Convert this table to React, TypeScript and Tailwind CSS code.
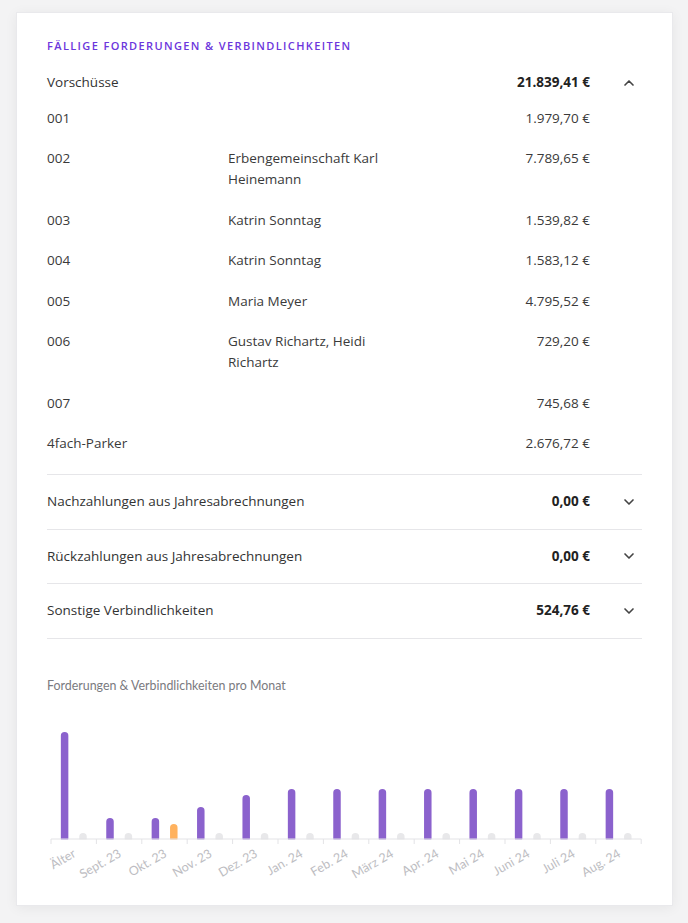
import { ChevronDown, ChevronUp } from "lucide-react"

const items = [
  { no: "001", name: "", amount: "1.979,70 €" },
  { no: "002", name: "Erbengemeinschaft Karl Heinemann", amount: "7.789,65 €" },
  { no: "003", name: "Katrin Sonntag", amount: "1.539,82 €" },
  { no: "004", name: "Katrin Sonntag", amount: "1.583,12 €" },
  { no: "005", name: "Maria Meyer", amount: "4.795,52 €" },
  { no: "006", name: "Gustav Richartz, Heidi Richartz", amount: "729,20 €" },
  { no: "007", name: "", amount: "745,68 €" },
  { no: "4fach-Parker", name: "", amount: "2.676,72 €" },
]

const sections = [
  { label: "Nachzahlungen aus Jahresabrechnungen", amount: "0,00 €" },
  { label: "Rückzahlungen aus Jahresabrechnungen", amount: "0,00 €" },
  { label: "Sonstige Verbindlichkeiten", amount: "524,76 €" },
]

// height of the first bar, second bar colour
const months = [
  { label: "Älter", h: 107, second: "gray" },
  { label: "Sept. 23", h: 21, second: "gray" },
  { label: "Okt. 23", h: 21, second: "orange" },
  { label: "Nov. 23", h: 32, second: "gray" },
  { label: "Dez. 23", h: 44, second: "gray" },
  { label: "Jan. 24", h: 50, second: "gray" },
  { label: "Feb. 24", h: 50, second: "gray" },
  { label: "März 24", h: 50, second: "gray" },
  { label: "Apr. 24", h: 50, second: "gray" },
  { label: "Mai 24", h: 50, second: "gray" },
  { label: "Juni 24", h: 50, second: "gray" },
  { label: "Juli 24", h: 50, second: "gray" },
  { label: "Aug. 24", h: 50, second: "gray" },
]

function Chart() {
  const x0 = 4
  const step = 45.4
  const axis = 130
  const bw = 7.5
  return (
    <svg width="595" height="180" className="block">
      {months.map((m, i) => {
        const left = x0 + step * i
        const c1 = left + 13.6
        const c2 = left + 32
        const h2 = m.second === "orange" ? 15 : 6
        return (
          <g key={m.label}>
            <rect x={c1 - bw / 2} y={axis - m.h} width={bw} height={m.h + 3} rx="3.75" fill="#8b62cd" />
            <rect x={c2 - bw / 2} y={axis - h2} width={bw} height={h2 + 3} rx="3.75" fill={m.second === "orange" ? "#ffb25e" : "#e8e8ea"} />
            <text
              x={left + step / 2 + 3}
              y={axis + 17}
              textAnchor="end"
              transform={`rotate(-30 ${left + step / 2 + 3} ${axis + 17})`}
              fontSize="12.5"
              fill="#bdbdc2"
              fontFamily="Lato, sans-serif"
            >
              {m.label}
            </text>
          </g>
        )
      })}
      {/* mask bottom of bars below axis */}
      <rect x="0" y={axis + 0.5} width="595" height="3" fill="#ffffff" />
      <line x1={x0} x2={x0 + step * 13} y1={axis} y2={axis} stroke="#e3e3e6" strokeWidth="1" />
      {Array.from({ length: 14 }).map((_, i) => (
        <line key={i} x1={x0 + step * i} x2={x0 + step * i} y1={axis} y2={axis + 5} stroke="#e3e3e6" strokeWidth="1" />
      ))}
    </svg>
  )
}

export default function App() {
  return (
    <div className="min-h-[923px] bg-[#f3f3f4] pt-[12px] pl-[16px] pr-[15px] font-['Open_Sans',sans-serif]">
      <div className="bg-white border border-[#e9e9ec] shadow-[0_2px_12px_rgba(0,0,0,0.06)] px-[30px] pt-[25px] h-[894px]">
        <h3 className="text-[11px] leading-[16px] font-semibold tracking-[0.125em] text-[#6c36dc] uppercase">
          Fällige Forderungen &amp; Verbindlichkeiten
        </h3>

        {/* Vorschüsse */}
        <div className="border-b border-[#e6e6e9] pb-[10px]">
          <div className="flex items-center pt-[18px] pb-[5px] text-[13.5px] leading-[21px]">
            <span className="flex-1 text-[#333]">Vorschüsse</span>
            <span className="font-bold text-[#222]">21.839,41 €</span>
            <span className="w-[52px] flex justify-end pr-[5px] text-[#444]">
              <ChevronUp size={16} strokeWidth={2.5} />
            </span>
          </div>
          {items.map((it) => (
            <div key={it.no} className="flex items-start py-[9.75px] text-[13.5px] leading-[21px] text-[#3a3a3a]">
              <span className="w-[181px] shrink-0">{it.no}</span>
              <span className="w-[165px] shrink-0">{it.name}</span>
              <span className="flex-1 text-right">{it.amount}</span>
              <span className="w-[52px] shrink-0" />
            </div>
          ))}
        </div>

        {sections.map((s) => (
          <div key={s.label} className="flex items-center h-[54.5px] border-b border-[#e6e6e9] text-[13.5px] leading-[21px]">
            <span className="flex-1 text-[#333]">{s.label}</span>
            <span className="font-bold text-[#222]">{s.amount}</span>
            <span className="w-[52px] flex justify-end pr-[5px] text-[#444]">
              <ChevronDown size={16} strokeWidth={2.5} />
            </span>
          </div>
        ))}

        <p className="mt-[39px] text-[12.4px] leading-[16px] text-[#7a7a80] font-['Lato',sans-serif]">
          Forderungen &amp; Verbindlichkeiten pro Monat
        </p>
        <div className="mt-[15px]">
          <Chart />
        </div>
      </div>
    </div>
  )
}
